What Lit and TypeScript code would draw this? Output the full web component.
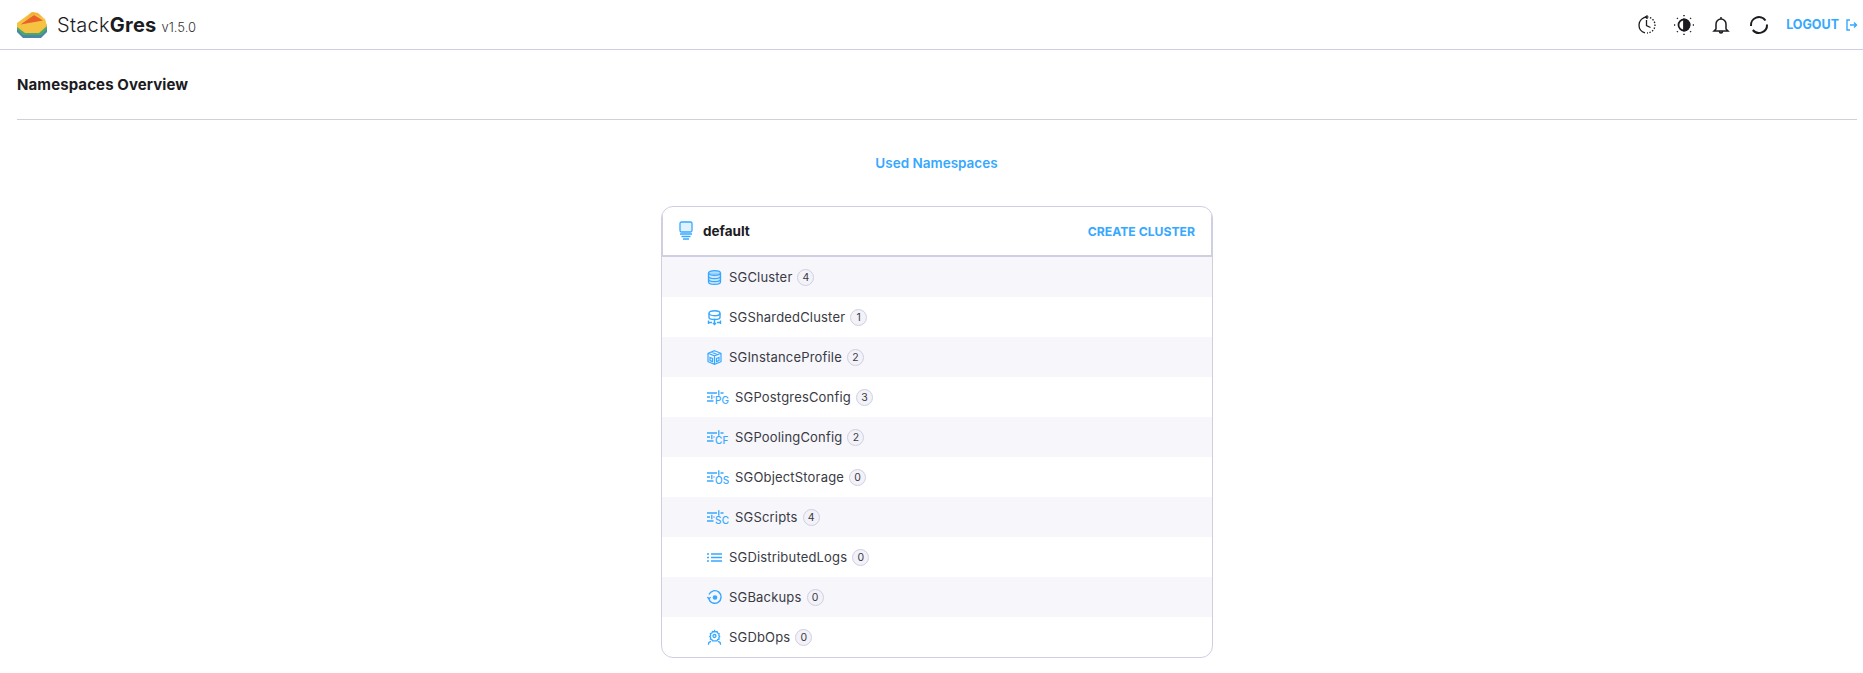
import { LitElement, html, css, svg } from 'lit';
import { customElement } from 'lit/decorators.js';

const configIcon = (label: string) => svg`
  <svg class="icon cfg" viewBox="0 0 21 14" fill="none" stroke="currentColor" stroke-width="1.3">
    <path d="M0 3h10M13.500 3h3M11.800 .2v5.600M0 7h3M6.500 7h1M4.800 4.700v4.600M0 11h6.500" />
    <text x="8" y="14" font-size="10" stroke="none" fill="currentColor" font-family="Inter, sans-serif" font-weight="500">${label}</text>
  </svg>`;

const icons: Record<string, unknown> = {
  cluster: svg`<svg class="icon" viewBox="0 0 14 15" fill="none" stroke="currentColor" stroke-width="1.3">
    <ellipse cx="7" cy="3" rx="6" ry="2.400" fill="currentColor" fill-opacity=".35"/>
    <path d="M1 3v9c0 1.300 2.700 2.400 6 2.400s6-1.100 6-2.400V3" fill="currentColor" fill-opacity=".2"/>
    <path d="M1 6.200c0 1.300 2.700 2.400 6 2.400s6-1.100 6-2.400M1 9.300c0 1.300 2.700 2.400 6 2.400s6-1.100 6-2.400"/>
  </svg>`,
  sharded: svg`<svg class="icon" viewBox="0 0 14 15" fill="none" stroke="currentColor" stroke-width="1.4">
    <ellipse cx="7" cy="3.200" rx="5.500" ry="2.500"/>
    <path d="M1.500 3.200v4.300c0 1.100 2.400 2 5.500 2s5.500-.9 5.500-2V3.200M.6 12.500h4M9.400 12.500h4M7 8.500v6M5.500 13 7 14.500 8.500 13M1 10.500v3.500M13 10.500v3.500"/>
  </svg>`,
  profile: svg`<svg class="icon" viewBox="0 0 15 15" fill="none" stroke="currentColor" stroke-width="1.200">
    <path d="M7.500 .7 14 3.300v8.400l-6.500 2.700L1 11.700V3.300zM1 3.300l6.500 2.600L14 3.300M7.500 5.900v8.500M4.200 2l6.500 2.700"/>
    <path d="M3 7.500l2.500 1v3L3 10.500zM12 7.500l-2.500 1v3l2.500-1z"/>
  </svg>`,
  logs: svg`<svg class="icon" viewBox="0 0 15 9" fill="none" stroke="currentColor" stroke-width="1.300">
    <path d="M0 1h2M4 1h11M0 4.500h2M4 4.500h11M0 8h2M4 8h11"/>
  </svg>`,
  backups: svg`<svg class="icon" viewBox="0 0 15 15" fill="none" stroke="currentColor" stroke-width="1.400">
    <circle cx="8" cy="7.500" r="2.300" fill="currentColor" stroke="none"/>
    <path d="M2 4.500A6.300 6.300 0 1 1 1.700 8.500M.5 7l1.300 1.800L3.600 7.300"/>
  </svg>`,
  dbops: svg`<svg class="icon" viewBox="0 0 14 15" fill="none" stroke="currentColor" stroke-width="1.300">
    <path d="M7 .7l1 1.200 1.600-.3.500 1.500 1.500.6-.3 1.600.9 1.200-.9 1.200.3 1.400-1.500.5-.5 1.200H4.900l-.5-1.200-1.500-.5.300-1.400L2.300 6.500l.9-1.200-.3-1.600 1.500-.6.500-1.500 1.600.3z"/>
    <circle cx="7" cy="6" r="1.500"/>
    <path d="M1 14.800v-.8c0-1.400 1-2.300 2.500-2.300M13 14.800v-.8c0-1.400-1-2.300-2.500-2.300"/>
  </svg>`,
};

const rows = [
  { name: 'SGCluster', count: 4, icon: icons.cluster },
  { name: 'SGShardedCluster', count: 1, icon: icons.sharded },
  { name: 'SGInstanceProfile', count: 2, icon: icons.profile },
  { name: 'SGPostgresConfig', count: 3, icon: configIcon('PG') },
  { name: 'SGPoolingConfig', count: 2, icon: configIcon('CF') },
  { name: 'SGObjectStorage', count: 0, icon: configIcon('OS') },
  { name: 'SGScripts', count: 4, icon: configIcon('SC') },
  { name: 'SGDistributedLogs', count: 0, icon: icons.logs },
  { name: 'SGBackups', count: 0, icon: icons.backups },
  { name: 'SGDbOps', count: 0, icon: icons.dbops },
];

@customElement('app-root')
export class AppRoot extends LitElement {
  static styles = css`
:host {
  display: block;
  height: 673px;
  overflow: hidden;
  background: #fff;
  color: #1b1b22;
  font-family: Inter, "Open Sans", sans-serif;
}

.top {
  height: 49px;
  border-bottom: 1px solid #cfcfe2;
  display: flex;
  align-items: center;
  padding: 0 6px 0 17px;
}

.logo {
  width: 30px;
  height: 26px;
  margin-right: 10px;
}

.brand {
  font-size: 20px;
  letter-spacing: 0.25px;
  font-weight: 300;
}

.brand b {
  font-weight: 700;
}

.version {
  font-size: 13px;
  font-weight: 300;
  margin-left: 5px;
  margin-top: 5px;
  color: #333;
}

.tools {
  margin-left: auto;
  display: flex;
  align-items: center;
  color: #1b1b22;
}

.tools svg {
  width: 18px;
  height: 18px;
  margin-right: 17px;
  overflow: visible;
}

.tools svg.sun {
  width: 22px;
  height: 22px;
  margin-right: 17px;
}

.tools svg.bell {
  margin-right: 20px;
}

.tools svg.sync {
  margin-right: 19px;
}

.logout {
  color: #36a8ff;
  font-size: 12.500px;
  font-weight: 700;
  display: flex;
  align-items: center;
  gap: 7px;
  margin-left: -1px;
}

.logout svg {
  width: 11px;
  height: 12px;
  margin: 0;
}

.title {
  margin: 0 6px 0 17px;
  height: 70px;
  border-bottom: 1px solid #cfcfe2;
  box-sizing: border-box;
  padding-top: 26px;
  font-size: 15px;
  letter-spacing: 0.1px;
  line-height: 18px;
  font-weight: 700;
}

.sub {
  text-align: center;
  color: #36a8ff;
  font-size: 13.500px;
  font-weight: 600;
  line-height: 16px;
  margin: 35px 0 35px;
  padding-left: 10px;
}

.card {
  width: 552px;
  margin-left: 661px;
  box-sizing: border-box;
  height: 452px;
  border: 1px solid #cfcfe2;
  border-radius: 12px;
  overflow: hidden;
}

.head {
  height: 50px;
  box-sizing: border-box;
  border-bottom: 2px solid #cfcfe2;
  border-left: 1px solid #cfcfe2;
  border-right: 1px solid #cfcfe2;
  display: flex;
  align-items: center;
  padding: 0 16px;
  font-size: 13.500px;
  font-weight: 700;
}

.head svg {
  width: 14px;
  height: 20px;
  margin-right: 10px;
  color: #36a8ff;
}

.create {
  margin-left: auto;
  color: #36a8ff;
  font-size: 12.200px;
  font-weight: 700;
}

.row {
  height: 40px;
  display: flex;
  align-items: center;
  padding-left: 45px;
  font-size: 13px;
  letter-spacing: 0.18px;
  color: #3a3a44;
}

.row:nth-child(odd) {
  background: #f6f6fb;
}

.icon {
  width: 15px;
  height: 15px;
  color: #36a8ff;
  margin-right: 7px;
  flex: none;
  overflow: visible;
}

.icon.cfg {
  width: 21px;
  height: 14px;
}

.count {
  margin-left: 5px;
  width: 15px;
  height: 15px;
  border: 1px solid #cfcfe2;
  background: #f2f2f8;
  border-radius: 50%;
  display: flex;
  align-items: center;
  justify-content: center;
  font-size: 10.500px;
  letter-spacing: 0;
}
  `;

  render() {
    return html`
      <div class="top">
        <svg class="logo" viewBox="0 0 30 26">
          <path d="M0 16l6-4h18l6 4v4l-6 6H6l-6-6z" fill="#4a86a8"/>
          <path d="M0 13l6-4h18l6 4v4l-6 6H6l-6-6z" fill="#4fa868"/>
          <path d="M0 11 15 0l13 7 2 7-8 7H8l-8-6z" fill="#f5c242"/>
          <path d="M3.600 12.500 17 3 26 8.500z" fill="#e8622a"/>
          <path d="M14 1 16 0 21 1 27 6.500 18 2.500 7 9z" fill="#f5b23a"/>
        </svg>
        <span class="brand">Stack<b>Gres</b></span>
        <span class="version">v1.5.0</span>
        <div class="tools">
          <svg viewBox="0 0 18 18" fill="none" stroke="currentColor" stroke-width="1.300">
            <path d="M9 1a8 8 0 0 0-8 8 8 8 0 0 0 6 7.800"/>
            <path d="M9 1a8 8 0 0 1 8 8 8 8 0 0 1-8 8" stroke-dasharray="1.500 1.500"/>
            <path d="M8.500 4v5.500l4 2M9.500 -.5 7.500 1l2 1.800"/>
          </svg>
          <svg class="sun" viewBox="0 0 22 22" fill="none" stroke="currentColor" stroke-width="1.800">
            <circle cx="11" cy="11" r="5.500"/>
            <path d="M11 5.500a5.500 5.500 0 0 1 0 11z" fill="currentColor"/>
            <path d="M11 1v1.200M11 19.800V21M1 11h1.200M19.800 11H21M4 4l.8.8M17.200 17.200l.8.800M18 4l-.8.8M4.800 17.200l-.8.800" stroke-width="1.500"/>
          </svg>
          <svg class="bell" viewBox="0 0 18 18" fill="none" stroke="currentColor" stroke-width="1.500">
            <path d="M4 13V8a5 5 0 0 1 10 0v5l2 2H2zM7.500 15.500a1.500 1.500 0 0 0 3 0M9 1v2"/>
          </svg>
          <svg class="sync" viewBox="0 0 18 18" fill="none" stroke="currentColor" stroke-width="2">
            <path d="M1 10A8 8 0 0 1 15.500 4.500M17 8.500A8 8 0 0 1 2.800 14"/>
          </svg>
          <div class="logout">
            LOGOUT
            <svg viewBox="0 0 11 12" fill="none" stroke="currentColor" stroke-width="1.400">
              <path d="M4 1H1v10h3M4 6h6M8 3.500 10.500 6 8 8.500"/>
            </svg>
          </div>
        </div>
      </div>
      <div class="title">Namespaces Overview</div>
      <div class="sub">Used Namespaces</div>
      <div class="card">
        <div class="head">
          <svg viewBox="0 0 14 20" fill="none" stroke="currentColor" stroke-width="1.300">
            <rect x="1" y="1" width="12" height="10" rx="1.500" fill="currentColor" fill-opacity=".15"/>
            <path d="M1 13h12M2.500 15.500h9M4 18h6"/>
          </svg>
          default
          <span class="create">CREATE CLUSTER</span>
        </div>
        <div class="list">
          ${rows.map(
            (r) => html`<div class="row">${r.icon}<span>${r.name}</span><span class="count">${r.count}</span></div>`
          )}
        </div>
      </div>
    `;
  }
}

declare global {
  interface HTMLElementTagNameMap {
    'app-root': AppRoot;
  }
}
